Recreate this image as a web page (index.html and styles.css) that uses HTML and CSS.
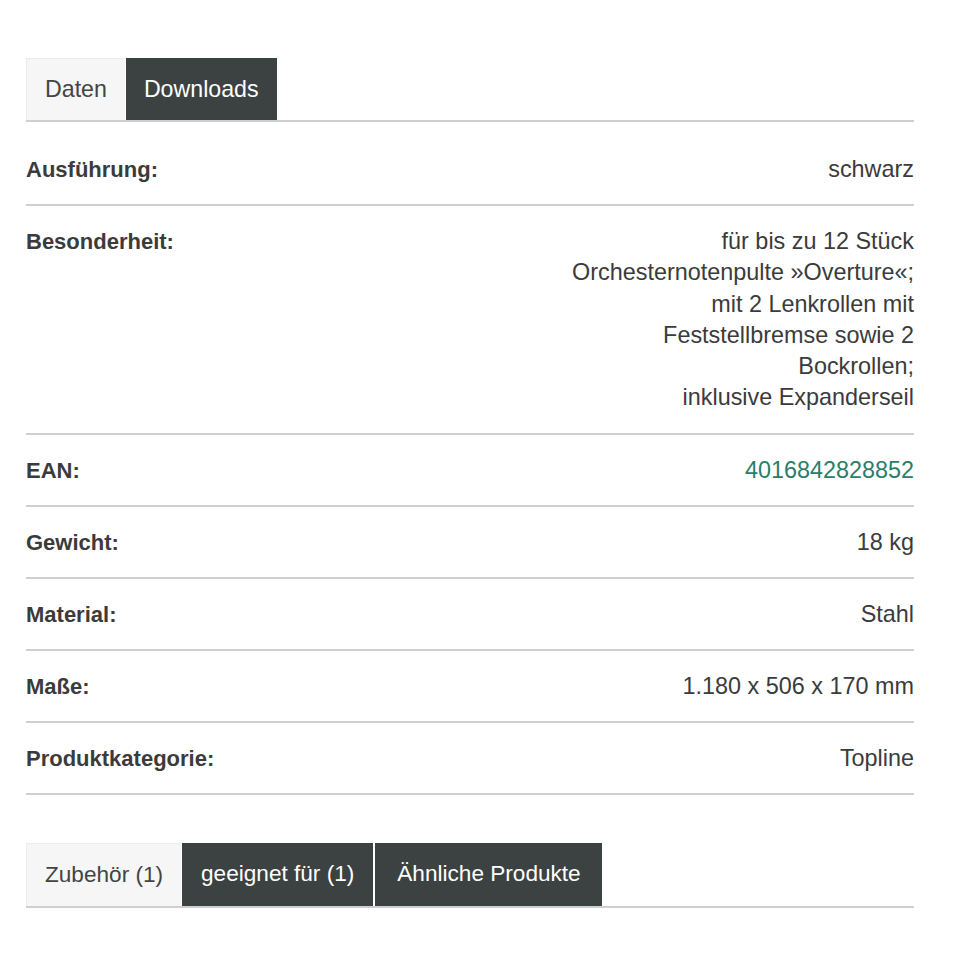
FILE: index.html
```html
<!DOCTYPE html>
<html lang="de">
<head>
<meta charset="utf-8">
<title>Produktdaten</title>
<link rel="stylesheet" href="styles.css">
</head>
<body>
<div class="page">
  <div class="tabs">
    <div class="tab tab-light">Daten</div>
    <div class="tab tab-dark">Downloads</div>
  </div>
  <div class="specs">
    <div class="row"><div class="label">Ausführung:</div><div class="value">schwarz</div></div>
    <div class="row"><div class="label">Besonderheit:</div><div class="value multi">für bis zu 12 Stück<br>Orchesternotenpulte »Overture«;<br>mit 2 Lenkrollen mit<br>Feststellbremse sowie 2<br>Bockrollen;<br>inklusive Expanderseil</div></div>
    <div class="row"><div class="label">EAN:</div><div class="value green">4016842828852</div></div>
    <div class="row"><div class="label">Gewicht:</div><div class="value">18 kg</div></div>
    <div class="row"><div class="label">Material:</div><div class="value">Stahl</div></div>
    <div class="row"><div class="label">Maße:</div><div class="value">1.180 x 506 x 170 mm</div></div>
    <div class="row"><div class="label">Produktkategorie:</div><div class="value">Topline</div></div>
  </div>
  <div class="tabs tabs-bottom">
    <div class="tab tab-light">Zubehör (1)</div>
    <div class="tab tab-dark tab-mid">geeignet für (1)</div>
    <div class="tab tab-dark tab-sep">Ähnliche Produkte</div>
  </div>
</div>
</body>
</html>
```
FILE: styles.css
```css
html, body {
  margin: 0;
  padding: 0;
  background: #ffffff;
}
body {
  font-family: "Liberation Sans", Arial, sans-serif;
  color: #3b3b3b;
  font-size: 23.4px;
}
.page {
  width: 888px;
  margin-left: 26px;
  padding-top: 58px;
}
.tabs {
  display: flex;
  gap: 1px;
  border-bottom: 2px solid #cfcfcf;
}
.tab {
  height: 62px;
  padding: 0 18px;
  display: flex;
  align-items: center;
  font-size: 23.2px;
  box-sizing: border-box;
}
.tab-light {
  background: #f6f6f7;
  color: #444444;
  border-top: 1px solid #ececec;
  border-left: 1px solid #ececec;
}
.tab-dark {
  background: #3c4242;
  color: #ffffff;
}
.specs {
  margin-top: 12px;
}
.row {
  display: flex;
  justify-content: space-between;
  align-items: flex-start;
  padding: 20px 0 19px;
  line-height: 31px;
  border-bottom: 2px solid #cfcfcf;
}
.label {
  font-weight: bold;
  font-size: 22px;
  color: #3b3b3b;
}
.value {
  text-align: right;
  color: #3b3b3b;
}
.multi {
  line-height: 31.3px;
}
.green {
  color: #2b7d6b;
}
.tabs-bottom {
  margin-top: 48px;
}
.tabs-bottom .tab {
  height: 63px;
  font-size: 22.6px;
}
.tabs-bottom .tab-mid {
  padding: 0 19px;
}
.tabs-bottom .tab-sep {
  margin-left: 1px;
  padding: 0 21px 0 22px;
}
```
